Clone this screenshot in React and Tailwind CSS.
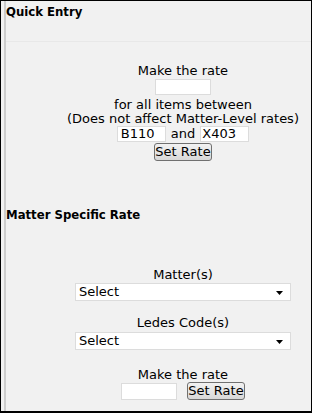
import React from "react";

function Btn() {
  return (
    <button className="h-[18px] w-[58px] rounded-[3px] border border-[#707070] bg-gradient-to-b from-[#f2f2f2] to-[#d8d8d8] p-0 text-[13px] leading-[14px] text-black">
      Set Rate
    </button>
  );
}

function Sel() {
  return (
    <div className="relative flex h-[18px] w-[216px] items-center border border-[#dcdcdc] bg-white pl-[3px] text-[13px] leading-[14px] text-black">
      Select
      <svg className="absolute right-[7px] top-[7px]" width="7" height="4" viewBox="0 0 7 4">
        <path d="M0 0H7L3.5 4Z" fill="#000" />
      </svg>
    </div>
  );
}

const headFont = { fontFamily: '"DejaVu Sans Condensed", "DejaVu Sans", sans-serif' };

export default function App() {
  return (
    <div
      className="h-[414px] w-[313px] bg-white"
      style={{ fontFamily: '"DejaVu Sans", Verdana, sans-serif' }}
    >
      <div className="flex h-[413px] w-[312px] border border-b-2 border-black bg-[#f1f1f1]">
        <div className="w-[3px]" />
        <div className="flex flex-1 flex-col border-l-2 border-[#cccccc] text-[13px] leading-[14px] text-black">
          <div className="pt-[4px] font-bold font-stretch-condensed" style={headFont}>
            Quick Entry
          </div>
          <div className="mt-[22px] border-b border-[#e8e8e8]" />
          <div className="flex flex-col items-center pl-[49px] pt-[22px]">
            <div>Make the rate</div>
            <div className="mt-[1px] h-[16px] w-[56px] border border-[#dcdcdc] bg-white" />
            <div className="mt-[3px]">for all items between</div>
            <div>(Does not affect Matter-Level rates)</div>
            <div className="flex items-center gap-[5px]">
              <div className="flex h-[16px] w-[49px] items-center border border-[#dcdcdc] bg-white pl-[3px]">B110</div>
              <span>and</span>
              <div className="flex h-[16px] w-[49px] items-center border border-[#dcdcdc] bg-white pl-[1px]">X403</div>
            </div>
            <div className="mt-[1px]">
              <Btn />
            </div>
          </div>
          <div className="mt-[47px] font-bold font-stretch-condensed" style={headFont}>
            Matter Specific Rate
          </div>
          <div className="flex flex-col items-center pl-[49px] pt-[46px]">
            <div>Matter(s)</div>
            <div className="mt-[1px]">
              <Sel />
            </div>
            <div className="mt-[15px]">Ledes Code(s)</div>
            <div className="mt-[2px]">
              <Sel />
            </div>
            <div className="mt-[18px]">Make the rate</div>
            <div className="flex items-center gap-[10px]">
              <div className="h-[17px] w-[56px] border border-[#dcdcdc] bg-white" />
              <Btn />
            </div>
          </div>
        </div>
      </div>
    </div>
  );
}
